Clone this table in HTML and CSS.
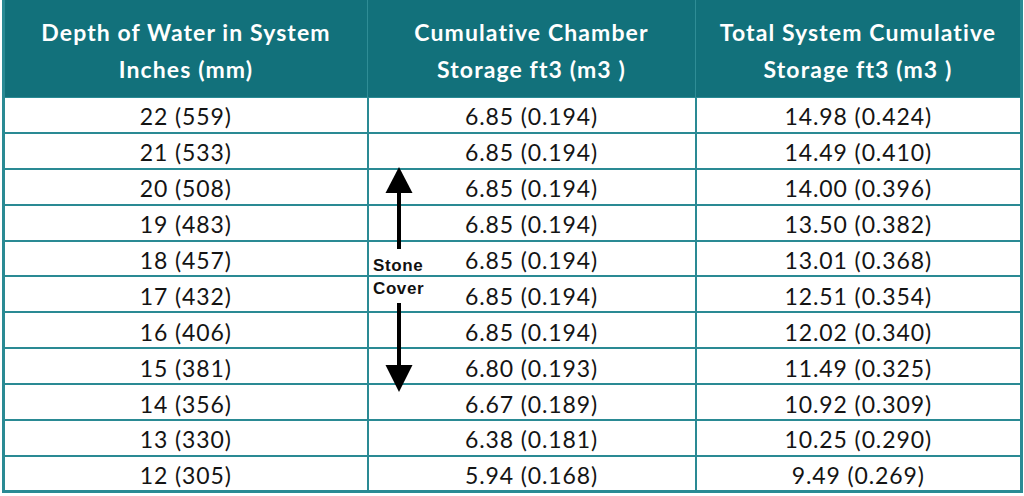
FILE: index.html
```html
<!DOCTYPE html>
<html>
<head>
<meta charset="utf-8">
<link rel="stylesheet" href="styles.css">
</head>
<body>
<div class="wrap">
  <table class="storage">
    <colgroup>
      <col class="c1"><col class="c2"><col class="c3">
    </colgroup>
    <thead>
      <tr>
        <th>Depth of Water in System<br>Inches (mm)</th>
        <th>Cumulative Chamber<br>Storage ft3 (m3 )</th>
        <th>Total System Cumulative<br>Storage ft3 (m3 )</th>
      </tr>
    </thead>
    <tbody>
      <tr><td>22 (559)</td><td>6.85 (0.194)</td><td>14.98 (0.424)</td></tr>
      <tr><td>21 (533)</td><td>6.85 (0.194)</td><td>14.49 (0.410)</td></tr>
      <tr><td>20 (508)</td><td>6.85 (0.194)</td><td>14.00 (0.396)</td></tr>
      <tr><td>19 (483)</td><td>6.85 (0.194)</td><td>13.50 (0.382)</td></tr>
      <tr><td>18 (457)</td><td>6.85 (0.194)</td><td>13.01 (0.368)</td></tr>
      <tr><td>17 (432)</td><td>6.85 (0.194)</td><td>12.51 (0.354)</td></tr>
      <tr><td>16 (406)</td><td>6.85 (0.194)</td><td>12.02 (0.340)</td></tr>
      <tr><td>15 (381)</td><td>6.80 (0.193)</td><td>11.49 (0.325)</td></tr>
      <tr><td>14 (356)</td><td>6.67 (0.189)</td><td>10.92 (0.309)</td></tr>
      <tr><td>13 (330)</td><td>6.38 (0.181)</td><td>10.25 (0.290)</td></tr>
      <tr><td>12 (305)</td><td>5.94 (0.168)</td><td>9.49 (0.269)</td></tr>
    </tbody>
  </table>
  <div class="note">
    <svg class="arrow up" width="28" height="82" viewBox="0 0 28 82">
      <polygon points="14,0 27.5,26 0.5,26" fill="#000"/>
      <rect x="12" y="24" width="4" height="58" fill="#000"/>
    </svg>
    <div class="note-text">Stone<br>Cover</div>
    <svg class="arrow down" width="28" height="89" viewBox="0 0 28 89">
      <rect x="12" y="0" width="4" height="66" fill="#000"/>
      <polygon points="0.5,62 27.5,62 14,89" fill="#000"/>
    </svg>
  </div>
</div>
</body>
</html>
```
FILE: styles.css
```css
html, body {
  margin: 0;
  padding: 0;
  background: #fff;
}
.wrap {
  position: relative;
  width: 1024px;
  height: 496px;
}
.storage {
  margin-left: 2px;
  width: 1018px;
  border-collapse: collapse;
  table-layout: fixed;
  font-family: Lato, "Open Sans", sans-serif;
  border-left: 3px solid #2a8a94;
  border-right: 3px solid #2a8a94;
  border-bottom: 3px solid #2a8a94;
}
.c1 { width: 364px; }
.c2 { width: 328px; }
.c3 { width: 326px; }
.storage th {
  background: #12717b;
  color: #fff;
  font-weight: 700;
  font-size: 23px;
  letter-spacing: 1.1px;
  line-height: 37px;
  height: 97px;
  padding: 5px 4px 0;
  box-sizing: border-box;
  border-left: 1px solid #2f8d96;
  border-right: 1px solid #2f8d96;
  vertical-align: middle;
}
.storage td {
  height: 35.9px;
  padding: 3px 0 0;
  box-sizing: border-box;
  text-align: center;
  font-size: 23px;
  letter-spacing: 0.9px;
  color: #141414;
  border: 2px solid #2a8a94;
  vertical-align: middle;
}
.storage tbody tr:first-child td {
  border-top: 1px solid #2a8a94;
}
.note {
  position: absolute;
  left: 372px;
  top: 167px;
  width: 60px;
  display: flex;
  flex-direction: column;
  align-items: flex-start;
}
.arrow {
  display: block;
  margin-left: 13px;
}
.note-text {
  font-family: "Liberation Sans", Arial, sans-serif;
  font-weight: 700;
  font-size: 17px;
  letter-spacing: 0.6px;
  line-height: 23px;
  color: #111;
  margin: 5px 0 3px 1px;
}
```
